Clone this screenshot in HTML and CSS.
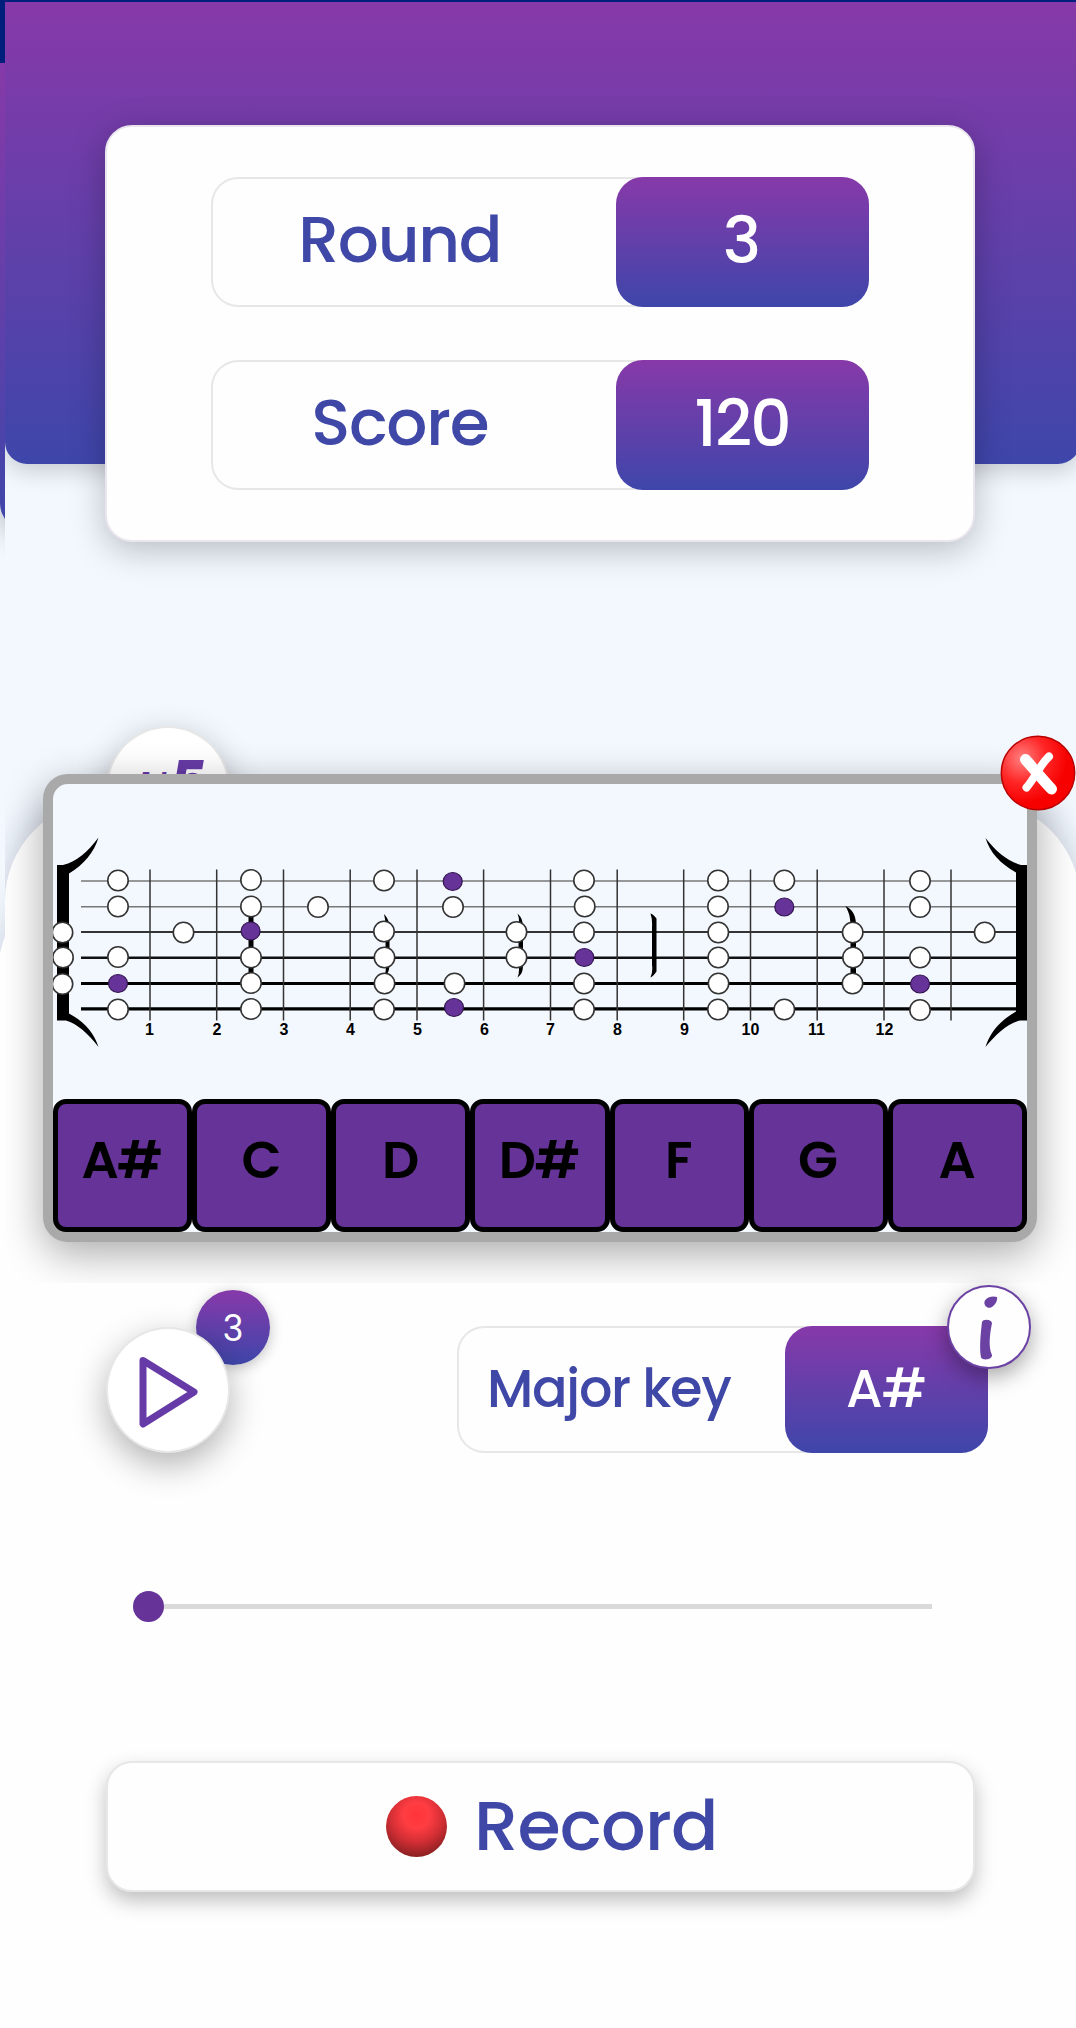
FILE: index.html
```html
<!DOCTYPE html>
<html lang="en">
<head>
<meta charset="utf-8">
<meta name="viewport" content="width=device-width, initial-scale=1">
<title>Fretboard game</title>
<link rel="stylesheet" href="styles.css">
</head>
<body>
<div class="under"><div class="under-head"></div><div class="under-sheet"></div></div>
<main class="app">
  <header class="head">
    <section class="card">
      <div class="pill"><span class="pill-label">Round</span><span class="pill-value">3</span></div>
      <div class="pill"><span class="pill-label">Score</span><span class="pill-value total">120</span></div>
    </section>
  </header>
  <section class="sheet">
    <button class="round-btn first"><span class="ord">1st</span><span class="five">5</span></button>
  </section>
  <section class="controls">
    <div class="row">
      <div class="play">
        <span class="badge">3</span>
        <button class="round-btn" aria-label="Play"><svg width="124" height="124" viewBox="0 0 124 124"><path d="M37 33.500 88 65 37 97Z" fill="none" stroke="#673ba7" stroke-width="7" stroke-linejoin="round"/></svg></button>
      </div>
      <div class="pill key-pill"><span class="pill-label">Major key</span><span class="pill-value">A#</span>
        <button class="info" aria-label="Info"><svg width="84" height="84" viewBox="0 0 84 84" fill="#6b42a4"><path d="M38 15.500C40 12 46 10.500 50 12C51 16 47 22 43 22.800C39 23 36 19 38 15.500Z"/><path d="M35 37C36 34 44 34 45 38C43 48 41 62 45 70C45.500 74.500 36 76 34 72.500C32 62 34 46 35 37Z"/></svg></button>
      </div>
    </div>
    <div class="slider"><span class="thumb"></span><span class="track"></span></div>
    <button class="record"><span class="dot"></span><span class="record-label">Record</span></button>
  </section>
  <section class="modal">
    <button class="close" aria-label="Close"><svg width="76" height="76" viewBox="0 0 76 76"><defs><radialGradient id="red" cx=".28" cy=".3" r=".62"><stop offset="0" stop-color="#ff8080"/><stop offset=".55" stop-color="#ff2525"/><stop offset="1" stop-color="#f60000"/></radialGradient></defs><circle cx="38" cy="38" r="36.700" fill="url(#red)" stroke="#b90000" stroke-width="1.500"/><path d="M25.500 24.500C33 33 43 45 51.500 54" fill="none" stroke="#fff" stroke-linecap="round" stroke-width="11"/><path d="M49 21.500C39 31 35 43 26.500 52.500" fill="none" stroke="#fff" stroke-linecap="round" stroke-width="8"/></svg></button>
    <svg class="fretboard" id="fretboard" width="973" height="315" viewBox="53.500 784.500 973 315">
      <g stroke="#111">
        <path d="M81 881.500H1020M81 907.300H1020" stroke="#777" stroke-width="1.500"/>
        <path d="M81 932.600H1020" stroke="#333" stroke-width="2"/>
        <path d="M81 958.300H1020" stroke-width="2.500"/>
        <path d="M81 984H1020M81 1009.300H1020" stroke="#000" stroke-width="3.200"/>
        <path d="M150 870V1021M216.700 870V1021M283.500 870V1021M350.200 870V1021M417 870V1021M483.600 870V1021M550.500 870V1021M617.200 870V1021M683.700 870V1021M750.500 870V1021M817.200 870V1021M884 870V1021M951 870V1021" stroke="#333" stroke-width="1.500"/>
      </g>
      <path d="M57 865.500H63C77 862 88 852 98.500 838C94 853 84 865 69 874V1014C84 1022 94 1033 98.500 1047.500C88 1034 77 1024 66 1021H57ZM1027 865.500H1021C1008 862 996 852 985.500 838.500C990 853 1000 864 1016 873V1012C1000 1021 990 1033 985.500 1047.500C996 1035 1007 1024 1020 1021H1027Z"/>
      <path d="M248.500 915H253.500V985H248.500ZM384 914.500C390 921 389.500 926 389.500 932V962C389.500 969 389 974 384 978Q387 970 385.500 962V930Q386 922 384 914.500ZM517.500 914C523 919 523 924 523 932V965C523 971 522 975 517.500 978Q520 972 518.500 964V930Q520 920 517.500 914ZM650.500 914Q653 914.500 656.500 919V972Q653 977 650.500 978Q653 973 652 965V928Q652.500 920 650.500 914ZM845.500 906.500C853 910 856 917 856 925V985H850.500V927C850.500 918 849 913 845.500 906.500Z"/>
      <g fill="#fff" stroke="#333" stroke-width="1.600">
        <circle cx="118" cy="881" r="10.200"/><circle cx="251" cy="880.500" r="10.200"/><circle cx="384" cy="881" r="10.200"/><circle cx="584" cy="881" r="10.200"/><circle cx="718" cy="881" r="10.200"/><circle cx="784.300" cy="881" r="10.200"/><circle cx="920" cy="881.500" r="10.200"/>
        <circle cx="118" cy="907" r="10.200"/><circle cx="251" cy="907" r="10.200"/><circle cx="318" cy="907.500" r="10.200"/><circle cx="453" cy="907.500" r="10.200"/><circle cx="584.700" cy="907" r="10.200"/><circle cx="718" cy="907" r="10.200"/><circle cx="920" cy="907.500" r="10.200"/>
        <circle cx="62.500" cy="933" r="10.200"/><circle cx="183.500" cy="933" r="10.200"/><circle cx="384" cy="932" r="10.200"/><circle cx="516.500" cy="932.500" r="10.200"/><circle cx="584" cy="933" r="10.200"/><circle cx="718.300" cy="933" r="10.200"/><circle cx="852.700" cy="933" r="10.200"/><circle cx="984.700" cy="933" r="10.200"/>
        <circle cx="63" cy="958" r="10.200"/><circle cx="118" cy="957.500" r="10.200"/><circle cx="251" cy="958" r="10.200"/><circle cx="384.500" cy="958" r="10.200"/><circle cx="516.500" cy="958" r="10.200"/><circle cx="718.300" cy="958" r="10.200"/><circle cx="853" cy="958" r="10.200"/><circle cx="920" cy="958" r="10.200"/>
        <circle cx="62.500" cy="984.500" r="10.200"/><circle cx="251" cy="983.500" r="10.200"/><circle cx="384.500" cy="984" r="10.200"/><circle cx="454.500" cy="984" r="10.200"/><circle cx="584" cy="984" r="10.200"/><circle cx="718.500" cy="984" r="10.200"/><circle cx="852.500" cy="984" r="10.200"/>
        <circle cx="118" cy="1010" r="10.200"/><circle cx="251" cy="1009.500" r="10.200"/><circle cx="384" cy="1010" r="10.200"/><circle cx="584" cy="1010" r="10.200"/><circle cx="718" cy="1010" r="10.200"/><circle cx="784.300" cy="1010" r="10.200"/><circle cx="920" cy="1010.500" r="10.200"/>
      </g>
      <g fill="#663399" stroke="#33154f" stroke-width="1.200">
        <ellipse cx="452.700" cy="882" rx="9.500" ry="9"/><ellipse cx="784.300" cy="907.500" rx="9.500" ry="9"/><ellipse cx="250.600" cy="931.500" rx="9.500" ry="9"/><ellipse cx="584.300" cy="958" rx="9.500" ry="9"/><ellipse cx="118" cy="984" rx="9.500" ry="9"/><ellipse cx="920" cy="984.500" rx="9.500" ry="9"/><ellipse cx="454" cy="1008" rx="9.500" ry="9"/>
      </g>
      <g class="fret-no">
        <text x="149.500" y="1035">1</text><text x="217" y="1035">2</text><text x="284" y="1035">3</text><text x="350.500" y="1035">4</text><text x="417.500" y="1035">5</text><text x="484.500" y="1035">6</text><text x="550.500" y="1035">7</text><text x="617.500" y="1035">8</text><text x="684.500" y="1035">9</text><text x="750.500" y="1035">10</text><text x="816.500" y="1035">11</text><text x="884.500" y="1035">12</text>
      </g>
    </svg>
    <div class="keys"><span>A#</span><span>C</span><span>D</span><span>D#</span><span>F</span><span>G</span><span>A</span></div>
  </section>
</main>
</body>
</html>
```
FILE: styles.css
```css
* { box-sizing: border-box; }
body {
  margin: 0;
  width: 1076px;
  height: 2028px;
  position: relative;
  overflow: hidden;
  background: #001f7d;
  font-family: Poppins, Inter, sans-serif;
  font-weight: 500;
}
button { padding: 0; border: 0; font: inherit; }
svg { display: block; }

/* previous screen, visible along the left edge */
.under {
  position: absolute;
  inset: 63px 0 0 0;
  background: #f3f8ff;
  overflow: hidden;
}
.under-head {
  height: 468px;
  border-radius: 0 0 0 28px;
  background: linear-gradient(#8739a9, #3e46aa);
  box-shadow: 0 4px 30px rgba(0, 0, 0, .3);
}
.under-sheet {
  height: 1400px;
  margin: 320px 0 0 -3px;
  border-radius: 130px 0 0 0;
  background: #fefefe;
  box-shadow: 0 0 36px rgba(20, 30, 60, .2);
}

.app {
  position: relative;
  width: 1075px;
  height: 2026px;
  margin: 0 0 0 5px;
  top: 2px;
  background: #f3f8ff;
  overflow: hidden;
}
.head {
  height: 461.500px;
  padding: 123px 0 0 100px;
  border-radius: 0 0 22px 22px;
  background: linear-gradient(#8739a9, #3e46aa);
  box-shadow: 0 6px 24px rgba(0, 0, 0, .2);
}
.card {
  width: 869.500px;
  height: 417px;
  padding: 50px 104px 0 104px;
  border: 2px solid #e9e6ee;
  border-radius: 27px;
  background: #fefefe;
  box-shadow: 0 8px 34px rgba(0, 0, 0, .25);
  display: flex;
  flex-direction: column;
  gap: 52.500px;
}
.pill {
  height: 130px;
  flex: none;
  position: relative;
  display: flex;
  border-radius: 27px;
  box-shadow: inset 0 0 0 2px #e7e7e7;
  color: #3f48a7;
}
.pill + .pill { margin-top: .5px; }
.pill-label {
  flex: 1;
  padding-right: 27px;
  font-size: 64.500px;
  line-height: 126px;
  text-align: center;
  letter-spacing: -1.300px;
}
.pill-value {
  width: 253px;
  border-radius: 27px;
  background: linear-gradient(#8739a9, #3e46aa);
  color: #fff;
  font-size: 64.500px;
  line-height: 128px;
  text-align: center;
}
.total { letter-spacing: -1.800px; }

.sheet {
  height: 1000px;
  margin-top: 337.500px;
  padding-left: 101px;
  border-radius: 100px 100px 0 0;
  background: #fefefe;
  box-shadow: 0 0 36px rgba(20, 30, 60, .2);
}
.round-btn {
  position: relative;
  display: block;
  width: 124px;
  height: 126px;
  border: 2px solid #e7e7e7;
  border-radius: 50%;
  background: #fff;
  box-shadow: 0 12px 34px rgba(0, 0, 0, .3);
}
.first {
  top: -75px;
  display: flex;
  align-items: flex-start;
  gap: 3px;
  padding: 22px 0 0 33px;
  color: #673ba7;
  font-style: italic;
}
.ord { padding-top: 18px; font-size: 21px; font-weight: 800; line-height: 24px; letter-spacing: -1px; }
.five { font-size: 52px; font-weight: 800; line-height: 62px; }

.modal {
  position: absolute;
  z-index: 1;
  left: 38px;
  top: 772px;
  width: 994px;
  height: 468px;
  border: 10.500px solid #a9a9a9;
  border-radius: 25px;
  background: #f3f8ff;
  box-shadow: 0 12px 42px rgba(0, 0, 0, .33);
}
.fretboard { width: 100%; height: 315px; }
.fret-no { font: 700 16px "Liberation Sans", sans-serif; text-anchor: middle; }
.keys {
  display: grid;
  grid-template-columns: repeat(7, 1fr);
  height: 132.500px;
}
.keys span {
  padding-right: 2px;
  border: 5px solid #000;
  border-radius: 13px;
  background: #663399;
  color: #000;
  font-size: 52px;
  font-weight: 600;
  line-height: 111px;
  text-align: center;
  letter-spacing: -1.500px;
}
.close {
  position: absolute;
  right: -48.500px;
  top: -49px;
  width: 76px;
  height: 76px;
  background: none;
}

.controls {
  position: absolute;
  z-index: 2;
  inset: 1281px 0 0 0;
  padding: 0 106px 0 101px;
  background: #fefefe;
}
.row {
  display: flex;
  justify-content: space-between;
  align-items: flex-start;
  padding-top: 43px;
}
.play { position: relative; padding-top: .5px; }
.badge {
  position: absolute;
  left: 90px;
  top: -36px;
  width: 74px;
  height: 75px;
  border-radius: 50%;
  background: linear-gradient(#8739a9, #3e46aa);
  box-shadow: 0 3px 14px rgba(0, 0, 0, .25);
  color: #fff;
  font-size: 35px;
  font-weight: 400;
  line-height: 78px;
  text-align: center;
}
.round-btn svg { margin: -2px 0 0 -2px; }
.key-pill { width: 531px; height: 126.500px; margin-right: -13.500px; }
.key-pill .pill-label { padding: 0 24px 0 0; font-size: 52.500px; line-height: 125px; letter-spacing: -1.300px; }
.key-pill .pill-value { width: 202.500px; font-size: 52.500px; line-height: 125px; letter-spacing: -1px; }
.info {
  position: absolute;
  right: -43px;
  top: -41px;
  width: 84px;
  height: 84px;
  border: 2px solid #6b42a4;
  border-radius: 50%;
  background: #fefefe;
  box-shadow: 0 8px 22px rgba(0, 0, 0, .35);
}
.info svg { margin: -2px; }
.slider {
  display: flex;
  align-items: center;
  height: 32px;
  margin: 138px 0 0 27px;
}
.thumb { width: 31px; height: 31px; border-radius: 50%; background: #663399; }
.track { width: 768px; height: 5px; background: #dadada; }
.record {
  display: flex;
  align-items: center;
  gap: 27px;
  width: 869px;
  height: 131px;
  margin-top: 138px;
  padding-left: 278px;
  border: 2px solid #e7e7e7;
  border-radius: 26px;
  background: #fefefe;
  box-shadow: 0 9px 20px rgba(0, 0, 0, .25);
  color: #3f48a7;
}
.dot {
  width: 61px;
  height: 61px;
  border-radius: 50%;
  background: radial-gradient(circle at 50% 32%, #ff3439 0, #ff3d42 25%, #d12e34 52%, #8b2022 80%);
}
.record-label { margin-top: -1px; font-size: 70px; line-height: 80px; letter-spacing: -.8px; }
```
